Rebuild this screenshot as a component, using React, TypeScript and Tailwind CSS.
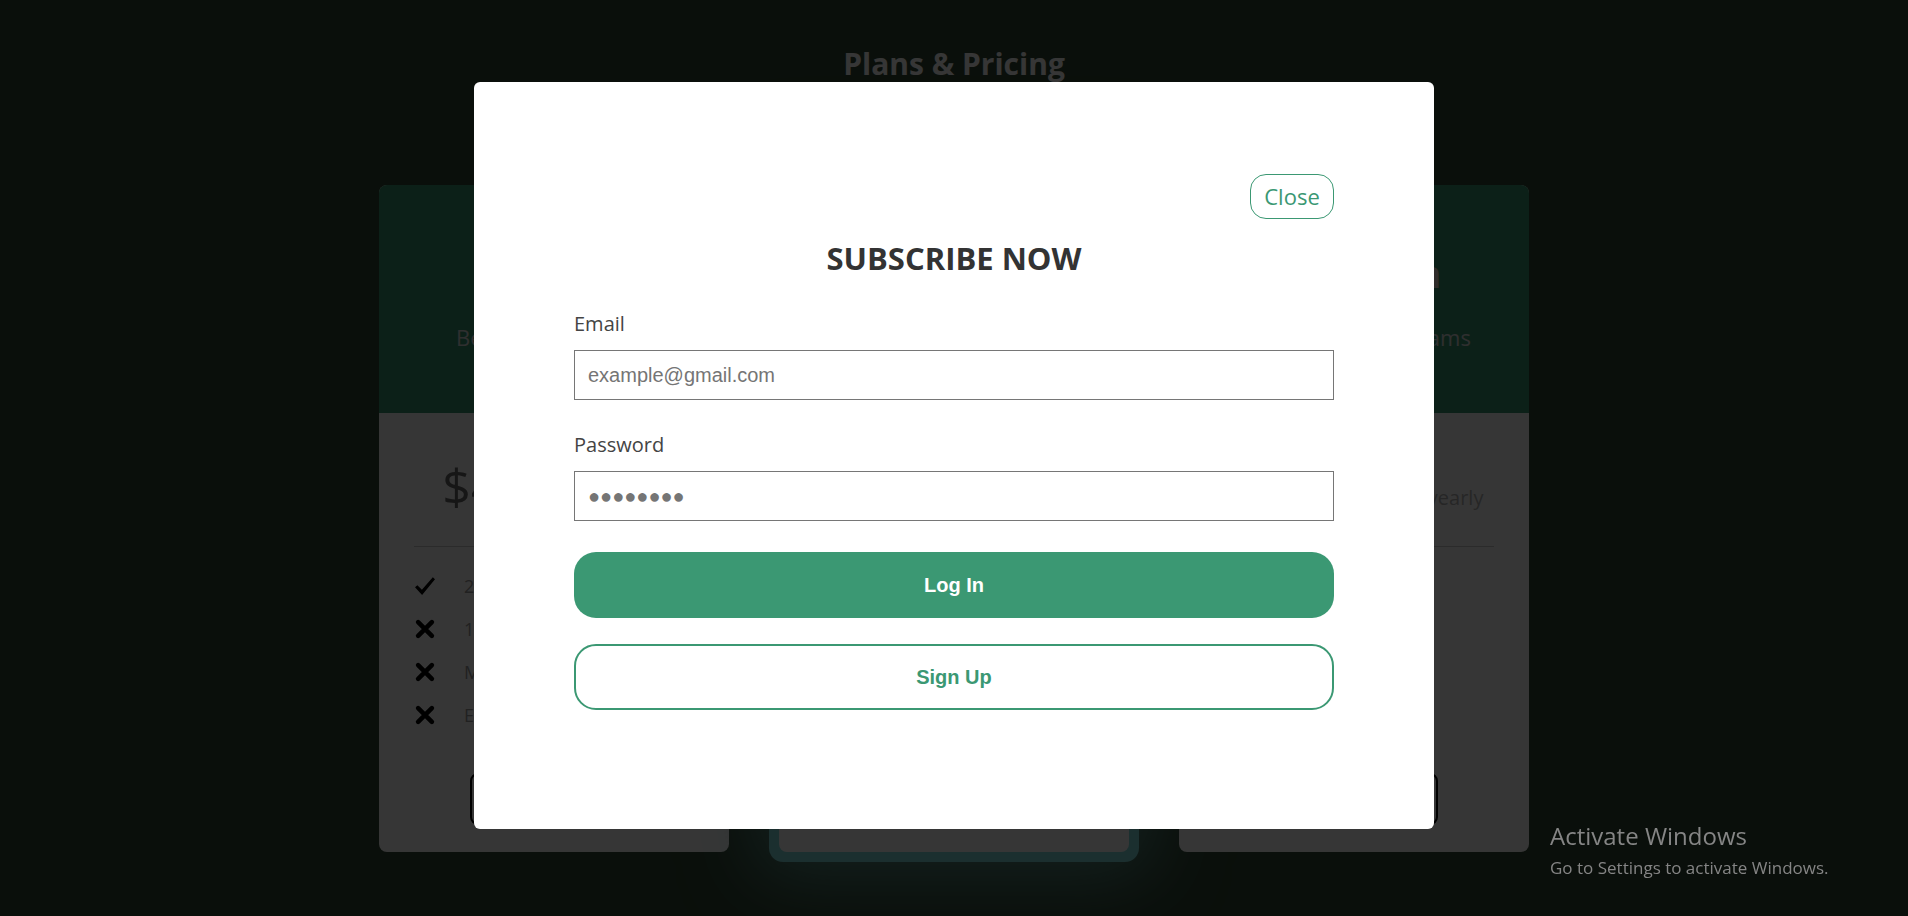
import React from 'react';

type Feature = { text: string; ok: boolean };
type Plan = {
  name: string;
  desc: string;
  price: string;
  period: string;
  features: Feature[];
  featured?: boolean;
};

const plans: Plan[] = [
  {
    name: 'Basic',
    desc: 'Best for individuals',
    price: '$4.99',
    period: 'monthly',
    features: [
      { text: '2 Users', ok: true },
      { text: '10GB Storage', ok: false },
      { text: 'Monthly Reports', ok: false },
      { text: 'Email Support', ok: false },
    ],
  },
  {
    name: 'Standard',
    desc: 'Best for small groups',
    price: '$49.99',
    period: '6 months',
    featured: true,
    features: [
      { text: '5 Users', ok: true },
      { text: '50GB Storage', ok: true },
      { text: 'Monthly Reports', ok: true },
      { text: 'Email Support', ok: false },
    ],
  },
  {
    name: 'Premium',
    desc: 'Perfect for large teams',
    price: '$149.99',
    period: 'yearly',
    features: [
      { text: 'Unlimited Users', ok: true },
      { text: '1TB Storage', ok: true },
      { text: 'Monthly Reports', ok: true },
      { text: 'Email Support', ok: true },
    ],
  },
];

const CheckIcon = () => (
  <svg viewBox="0 0 24 22" className="h-[20px] w-[22px]" fill="black">
    <path d="M1 12.5 L3.6 10.2 L8.6 15.2 L20.6 1.5 L23 3.6 L8.8 20.8 Z" />
  </svg>
);

const XIcon = () => (
  <svg viewBox="0 0 24 24" className="h-[22px] w-[22px]" fill="none" stroke="black" strokeWidth={5} strokeLinecap="round">
    <path d="M4.5 4.5 L19.5 19.5 M19.5 4.5 L4.5 19.5" />
  </svg>
);

const PlanCard = ({ plan }: { plan: Plan }) => (
  <div className="flex h-[667px] w-[350px] flex-col overflow-hidden rounded-lg bg-white">
    <div className="h-[228px] shrink-0 bg-[#3b9873] pt-[62px] text-center">
      <h3 className="text-[38px] font-bold leading-[52px] text-[#e2d3ca]">{plan.name}</h3>
      <p className="mt-[23px] text-[22px] leading-[30px] text-[#dddddd]">{plan.desc}</p>
    </div>
    <div className="flex flex-1 flex-col px-[35px] pb-[27px]">
      <div className="flex items-baseline justify-center pt-[41px] leading-[65px]">
        <span className="text-[50px] text-[#6a6a6a]">{plan.price}</span>
        <span className="ml-[6px] text-[20px] text-[#b5b5b5]">/ {plan.period}</span>
      </div>
      <div className="mt-[16px] h-px bg-[#cccccc]" />
      <ul className="mt-[28px] flex flex-col gap-[21px]">
        {plan.features.map((f, i) => (
          <li key={i} className="flex h-[22px] items-center gap-[28px] text-[18px] text-[#9a9a9a]">
            <span className="flex w-[22px] justify-center">{f.ok ? <CheckIcon /> : <XIcon />}</span>
            <span>{f.text}</span>
          </li>
        ))}
      </ul>
      <button className="mx-auto mt-auto h-[52px] w-[168px] rounded-lg border-2 border-black text-[18px] text-[#555555]">
        Get Started
      </button>
    </div>
  </div>
);

export default function App() {
  return (
    <div className="relative h-screen overflow-hidden bg-[#304734] font-['Open_Sans',sans-serif]">
      {/* pricing page behind the modal */}
      <h1 className="pt-[46px] text-center text-[30px] font-bold leading-[36px] text-white">Plans &amp; Pricing</h1>
      <div className="mt-[93px] flex items-center justify-center gap-[40px]">
        {plans.map((plan) =>
          plan.featured ? (
            <div
              key={plan.name}
              className="rounded-[14px] bg-[#81dbdb] p-[10px] shadow-[0_0_70px_15px_rgba(129,219,219,0.55)]"
            >
              <PlanCard plan={plan} />
            </div>
          ) : (
            <PlanCard key={plan.name} plan={plan} />
          )
        )}
      </div>

      {/* modal */}
      <div className="fixed inset-0 flex justify-center bg-[rgba(0,0,0,0.79)] pt-[82px]">
        <div className="flex h-[747px] w-[960px] flex-col rounded-md bg-white px-[100px] pt-[92px]">
          <button className="flex h-[45px] w-[84px] items-center justify-center self-end rounded-[16px] border border-[#3b9873] text-[22px] text-[#3b9873]">
            Close
          </button>
          <h2 className="mt-[18px] text-center text-[31px] font-bold leading-[42px] text-[#333333]">SUBSCRIBE NOW</h2>

          <label htmlFor="email" className="mt-[31px] text-[20px] leading-[27px] text-[#444444]">
            Email
          </label>
          <input
            id="email"
            type="email"
            placeholder="example@gmail.com"
            className="mt-[13px] h-[50px] w-full border border-[#767676] px-[13px] font-['Liberation_Sans',Arial,sans-serif] text-[20px] text-black outline-none placeholder:text-[#757575]"
          />

          <label htmlFor="password" className="mt-[31px] text-[20px] leading-[27px] text-[#444444]">
            Password
          </label>
          <input
            id="password"
            type="password"
            placeholder="●●●●●●●●"
            className="mt-[13px] h-[50px] w-full border border-[#767676] px-[13px] font-['Liberation_Sans',Arial,sans-serif] text-[20px] text-black outline-none placeholder:text-[#757575]"
          />

          <button className="mt-[31px] h-[66px] w-full rounded-[22px] bg-[#3b9873] font-['Liberation_Sans',Arial,sans-serif] text-[20px] font-bold text-white">
            Log In
          </button>
          <button className="mt-[26px] h-[66px] w-full rounded-[22px] border-2 border-[#3b9873] bg-white font-['Liberation_Sans',Arial,sans-serif] text-[20px] font-bold text-[#3b9873]">
            Sign Up
          </button>
        </div>
      </div>

      {/* windows watermark */}
      <div className="pointer-events-none fixed left-[1550px] top-[820px] text-[#858585]">
        <div className="text-[24px] leading-[32px]">Activate Windows</div>
        <div className="mt-[4px] text-[17px] leading-[23px]">Go to Settings to activate Windows.</div>
      </div>
    </div>
  );
}
